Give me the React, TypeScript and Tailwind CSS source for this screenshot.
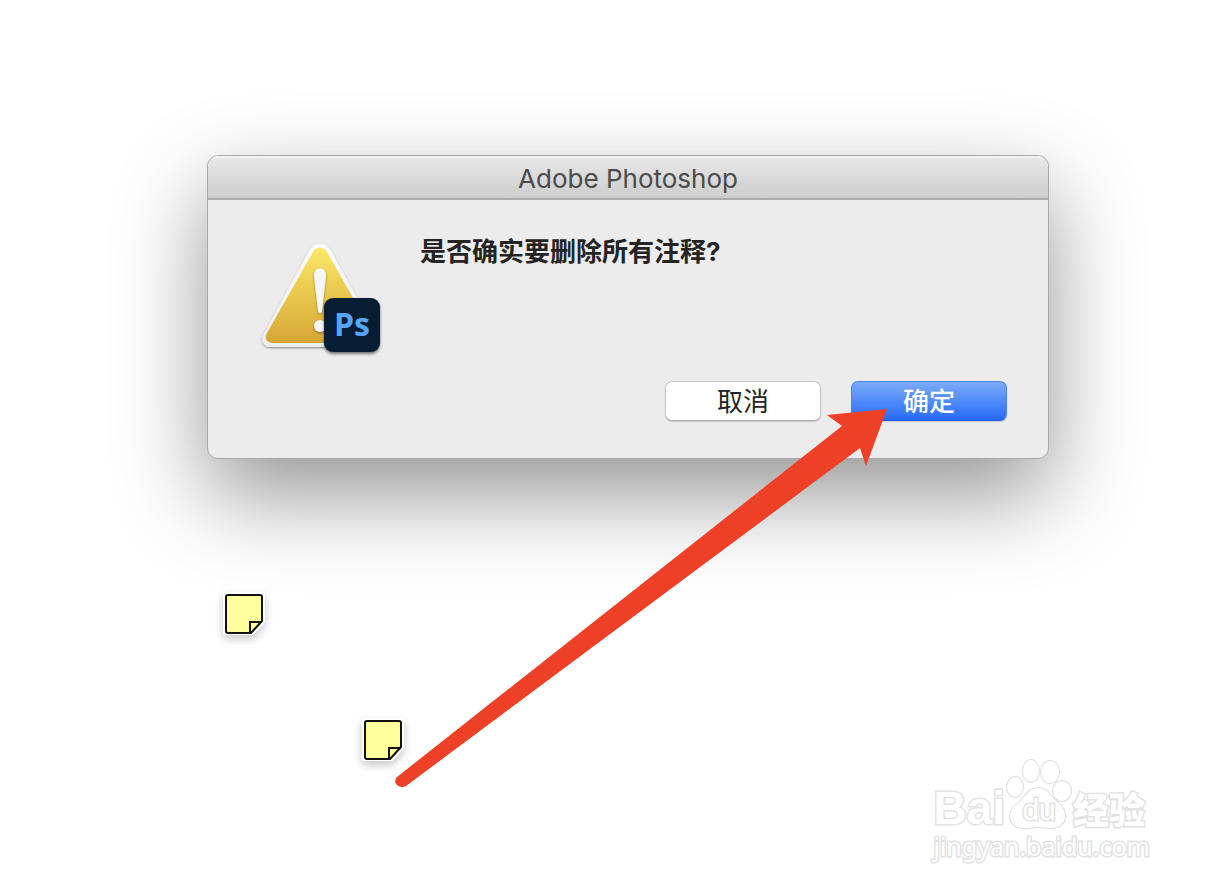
import { useState } from 'react';

const fontStack = "font-['Inter','Noto_Sans_CJK_SC',sans-serif]";

function WarningIcon() {
  return (
    <svg width="128" height="120" viewBox="0 0 128 120" className="block" aria-label="警告" role="img">
      <defs>
        <linearGradient id="warn-fill" x1="0" y1="0" x2="0" y2="1">
          <stop offset="0" stopColor="#fae967" />
          <stop offset="0.5" stopColor="#e8c74d" />
          <stop offset="1" stopColor="#d6a636" />
        </linearGradient>
        <linearGradient id="warn-edge" x1="0" y1="0" x2="0" y2="1">
          <stop offset="0" stopColor="#fbfbfb" />
          <stop offset="1" stopColor="#eeeeee" />
        </linearGradient>
        <filter id="warn-shadow" x="-20%" y="-20%" width="140%" height="140%">
          <feDropShadow dx="0" dy="1" stdDeviation="1" floodColor="#000" floodOpacity="0.45" />
        </filter>
      </defs>
      <path
        d="M54 9C58 2 70 2 74 9L121 93C126 102 121 107 113 107H16C7 107 4 101 8 93Z"
        fill="url(#warn-edge)"
        filter="url(#warn-shadow)"
      />
      <path
        d="M57 12C60 6 68 6 71 12L117 93C120 99 117 103 112 103H18C10 103 8 98 11 93Z"
        fill="url(#warn-fill)"
      />
      <g fill="#f6f6f6" filter="url(#warn-shadow)">
        <path d="M58 36C57 26 71 26 70 36L66 71C66 74 62 74 62 71Z" />
        <circle cx="64" cy="86" r="6" />
      </g>
    </svg>
  );
}

function StickyNote() {
  return (
    <svg width="60" height="60" viewBox="0 0 60 60" className="block">
      <defs>
        <filter id="note-shadow" x="-30%" y="-30%" width="160%" height="160%">
          <feDropShadow dx="0" dy="4" stdDeviation="4" floodColor="#000" floodOpacity="0.22" />
        </filter>
      </defs>
      <path
        d="M11 7H47Q50 7 50 10V37L38 50H11Q8 50 8 47V10Q8 7 11 7Z"
        fill="#fff"
        filter="url(#note-shadow)"
      />
      <path
        d="M13 10H45Q47 10 47 12V36L36 48H13Q11 48 11 46V12Q11 10 13 10Z"
        fill="#ffff9c"
        stroke="#111"
        strokeWidth="2"
        strokeLinejoin="round"
      />
      <path d="M35 48V37H47" fill="none" stroke="#111" strokeWidth="2" />
    </svg>
  );
}

function PointerArrow() {
  return (
    <svg width="500" height="390" viewBox="0 0 500 390" className="block">
      <path
        d="M496 9L436 15L451 26L6 377Q3 380 5 384Q9 389 15 386L469 48L475 66Z"
        fill="#ed4026"
      />
    </svg>
  );
}

function Watermark() {
  return (
    <div className="text-white [paint-order:stroke_fill] [-webkit-text-stroke:3px_#e2e2e2]">
      <div className="flex items-end">
        <span className="pb-0.5 font-['Liberation_Sans',sans-serif] text-[46px] leading-10 font-bold">Bai</span>
        <span className="relative block h-[72px] w-[68px]">
          <svg width="68" height="72" viewBox="0 0 68 72" fill="#fff" stroke="#dedede" strokeWidth="2">
            <ellipse cx="10" cy="29" rx="8" ry="10" />
            <ellipse cx="26" cy="13" rx="8" ry="11" />
            <ellipse cx="45" cy="14" rx="9" ry="11" />
            <ellipse cx="57" cy="33" rx="9" ry="10" />
            <path d="M33 30C43 30 45 38 52 44C64 52 63 70 46 70C41 70 38 69 33 69C28 69 25 71 18 70C2 69 2 53 12 46C21 39 23 30 33 30Z" />
          </svg>
          <span className="absolute inset-x-0 bottom-1 text-center font-['Liberation_Sans',sans-serif] text-[30px] leading-8">
            du
          </span>
        </span>
        <span className="pb-1 font-['Noto_Sans_CJK_SC',sans-serif] text-[36px] leading-9 font-black">经验</span>
      </div>
      <div className="font-['Noto_Sans',sans-serif] text-[25px] leading-8">jingyan.baidu.com</div>
    </div>
  );
}

export default function App() {
  const [open, setOpen] = useState(true);

  const closeDialog = () => setOpen(false);

  return (
    <main className={`relative min-h-screen overflow-hidden bg-white pt-[155px] pl-10 ${fontStack}`}>
      {/* 注释图标 */}
      <div className="absolute top-[585px] left-[215px]">
        <StickyNote />
      </div>
      <div className="absolute top-[711px] left-[354px]">
        <StickyNote />
      </div>

      {/* 确认对话框 */}
      {open && (
        <section
          role="alertdialog"
          aria-labelledby="dialog-title"
          aria-describedby="dialog-message"
          className="relative mx-auto w-full max-w-[842px] overflow-clip rounded-[11px] border border-[#a8a8a8] bg-[#ececec] shadow-[0_36px_90px_rgba(0,0,0,0.42)]"
        >
          <h1
            id="dialog-title"
            className="flex h-11 items-center justify-center border-b-2 border-[#acacac] bg-linear-to-b from-[#e8e8e8] to-[#cdcdcd] pt-1 text-[26px] leading-8 font-normal text-[#4b4b4b] shadow-[inset_0_2px_0_#f3f3f3]"
          >
            Adobe Photoshop
          </h1>

          <div className="flex px-12 pt-8">
            <div className="relative mt-2 w-[164px] shrink-0">
              <WarningIcon />
              <span className="absolute top-[58px] left-[68px] flex h-[54px] w-14 items-center justify-center rounded-[9px] bg-[#071d33] pb-0.5 font-['Open_Sans',sans-serif] text-[32px] leading-8 font-bold text-[#54a5fb] shadow-[0_2px_3px_rgba(0,0,0,0.5)]">
                Ps
              </span>
            </div>
            <p id="dialog-message" className="text-[26px] leading-10 font-bold text-[#242424]">
              是否确实要删除所有注释?
            </p>
          </div>

          <div className="flex justify-end gap-[30px] px-[41px] pt-[21px] pb-[37px]">
            <button
              type="button"
              onClick={closeDialog}
              className="h-10 w-[156px] rounded-[7px] border border-[#c4c4c4] border-b-[#aaa] bg-white pt-0.5 text-[26px] leading-8 text-[#242424] shadow-[0_1px_1px_rgba(0,0,0,0.15)]"
            >
              取消
            </button>
            <button
              type="button"
              onClick={closeDialog}
              className="h-10 w-[156px] rounded-[7px] border border-[#4a86ee] border-b-[#1f5fee] bg-linear-to-b from-[#7baaf7] to-[#2769f8] pt-0.5 text-[26px] leading-8 font-medium text-white shadow-[0_1px_1px_rgba(0,0,0,0.15)]"
            >
              确定
            </button>
          </div>
        </section>
      )}

      {/* 指向确定按钮的箭头 */}
      <div className="pointer-events-none absolute top-[400px] left-[391px]">
        <PointerArrow />
      </div>

      {/* 水印 */}
      <div className="absolute right-[66px] bottom-[28px]">
        <Watermark />
      </div>
    </main>
  );
}
